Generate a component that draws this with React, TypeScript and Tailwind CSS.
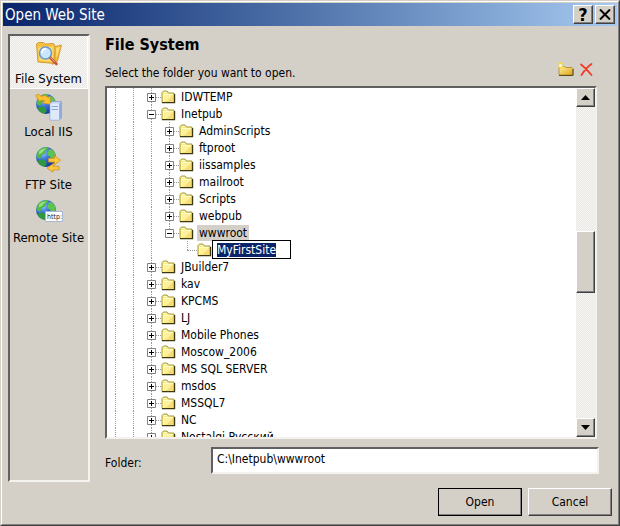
import { useEffect, useRef, useState } from "react";

type TreeRow = {
  name: string;
  depth: number;
  open?: boolean;
  last?: boolean;
  selected?: boolean;
  editing?: boolean;
};

const rows: TreeRow[] = [
  { name: "IDWTEMP", depth: 2 },
  { name: "Inetpub", depth: 2, open: true },
  { name: "AdminScripts", depth: 3 },
  { name: "ftproot", depth: 3 },
  { name: "iissamples", depth: 3 },
  { name: "mailroot", depth: 3 },
  { name: "Scripts", depth: 3 },
  { name: "webpub", depth: 3 },
  { name: "wwwroot", depth: 3, open: true, last: true, selected: true },
  { name: "MyFirstSite", depth: 4, last: true, editing: true },
  { name: "JBuilder7", depth: 2 },
  { name: "kav", depth: 2 },
  { name: "KPCMS", depth: 2 },
  { name: "LJ", depth: 2 },
  { name: "Mobile Phones", depth: 2 },
  { name: "Moscow_2006", depth: 2 },
  { name: "MS SQL SERVER", depth: 2 },
  { name: "msdos", depth: 2 },
  { name: "MSSQL7", depth: 2 },
  { name: "NC", depth: 2 },
  { name: "Nostalgi Русский", depth: 2 },
];

const raised =
  "border border-t-white border-l-white border-r-[#404040] border-b-[#404040] bg-[#d4d0c8] shadow-[inset_-1px_-1px_0_#808080]";
const sunken =
  "border-2 border-t-[#606060] border-l-[#606060] border-r-[#f4f2ee] border-b-[#f4f2ee]";
const dither =
  "bg-[#f1f0ed] bg-[conic-gradient(#e8e6e2_25%,#f8f7f5_0_50%,#e8e6e2_0_75%,#f8f7f5_0)] bg-size-[2px_2px]";

const FolderIcon = () => (
  <svg width="15" height="14" viewBox="0 0 15 14" className="shrink-0">
    <path d="M1 12.5V2.5L2.5 1H6l1.5 2H13v9.5z" fill="#f8ec84" stroke="#a39a3c" />
    <path d="M2 11V4h10v7z" fill="#fff09a" />
    <path d="M5 12L12 5v7z" fill="#f5dc76" />
    <path d="M2 4.5h10M2.5 4v8M3 2.5h3" stroke="#fffbc8" fill="none" />
    <path d="M1 12.7h12.6V4" stroke="#3c3810" strokeWidth="1.2" fill="none" />
  </svg>
);

const Expander = ({ open }: { open?: boolean }) => (
  <svg width="9" height="9" viewBox="0 0 9 9" className="absolute top-[5px] left-1">
    <path d="M.5.5h8v8h-8z" fill="#fff" stroke="#808080" />
    <path d={open ? "M2 4.5h5" : "M2 4.5h5M4.5 2v5"} stroke="#000" />
  </svg>
);

const Guides = ({ row }: { row: TreeRow }) => {
  const cells = [];
  for (let i = 0; i < row.depth; i++) {
    cells.push(
      <span key={i} className="relative w-[18px] shrink-0 self-stretch">
        {!(row.depth === 4 && i === 3) && (
          <span className="absolute inset-y-0 left-2 border-l border-dotted border-[#999]" />
        )}
      </span>
    );
  }
  return (
    <>
      {cells}
      <span className="relative w-[18px] shrink-0 self-stretch">
        <span
          className={`absolute top-0 left-2 border-l border-dotted border-[#999] ${
            row.last ? "h-[9px]" : "h-full"
          }`}
        />
        <span className="absolute top-[9px] right-0 left-2 border-t border-dotted border-[#999]" />
        {!row.editing && <Expander open={row.open} />}
      </span>
    </>
  );
};

const Globe = ({ id }: { id: string }) => (
  <>
    <defs>
      <radialGradient id={id} cx="35%" cy="30%" r="75%">
        <stop offset="0" stopColor="#9cc8fa" />
        <stop offset="0.4" stopColor="#3f78dc" />
        <stop offset="1" stopColor="#12309a" />
      </radialGradient>
    </defs>
    <circle cx="11" cy="11" r="10" fill={`url(#${id})`} />
    <path d="M2 7C4 3 8 1 12 1l1.500 2-3 1.500-.5 3L7 9l-2 4-2-1-1.500-1z" fill="#4fb848" />
    <path d="M4 14l4-.5 3 2 .5 3-2 2.300C7 20.500 4 18.500 2.500 15.500z" fill="#2f9a3c" />
    <path d="M14 3l3 .5c4 3 4.500 7 3 11l-3 2.500-2-3 .5-3-3-2 .5-3z" fill="#5cc450" />
    <path d="M4 5.500C6 3 9 2 11.500 2.500L9 4.500 7 7 4 8.500z" fill="#a8e890" opacity=".8" />
  </>
);

const FileSystemIcon = () => (
  <svg width="28" height="28" viewBox="0 0 28 28">
    <path d="M18 7l8.500-2-4 16-5 3.500z" fill="#f4b930" stroke="#c98b1c" strokeWidth=".7" />
    <path d="M21 8l4-1.500-3.500 12z" fill="#fce07a" />
    <path d="M1.500 4l2-1.500h5L10.500 4l8-.5 1.500 2.500-.5 17.500L3 22z" fill="#f6c040" stroke="#cf962a" strokeWidth=".9" />
    <path d="M3 7.500l15.500-1-.5 15.500L4 20.500z" fill="#fbd96a" />
    <circle cx="10.500" cy="13" r="6" fill="#c8e6fc" stroke="#6a9ad0" strokeWidth="1.600" />
    <path d="M7 13c0-3 2-4.200 4-4.200" stroke="#fff" strokeWidth="2" fill="none" />
    <path d="M15.500 18l6 6" stroke="#c4583a" strokeWidth="2.600" strokeLinecap="round" />
    <path d="M15.500 17.500l4.500 4.500" stroke="#f0b496" strokeWidth=".8" />
  </svg>
);

const LocalIisIcon = () => (
  <svg width="28" height="28" viewBox="0 0 28 28">
    <Globe id="globe-iis" />
    <path d="M.7 2.500L3.500 1 6 3.500c3-1.500 5-1.200 7 1l2-1.500.5 8.500-8-1.500 2.300-1.800C8 6.700 6.500 7 4.500 8.500z" fill="#fbbf30" stroke="#c98a14" strokeWidth=".7" />
    <path d="M15 10.500L17 8.500h9.500V25l-2 2H15z" fill="#c6d6f4" stroke="#7f98cc" strokeWidth=".7" />
    <path d="M15.500 10.500h8.700v16.200h-8.700z" fill="#dfe9fc" />
    <path d="M16.500 13.500h6.500M16.500 16.500h6.500" stroke="#8fa8d8" />
    <path d="M24.200 10.500l2.100-1.700v16l-2.100 1.900z" fill="#8ea8dc" />
  </svg>
);

const FtpIcon = () => (
  <svg width="28" height="28" viewBox="0 0 28 28">
    <Globe id="globe-ftp" />
    <path d="M13.500 12.300h6V9.500l6 4.700-6 4.600V16h-6z" fill="#ffc842" stroke="#c98a14" strokeWidth=".7" />
    <path d="M24 20.300h-6v-2.500L12 22l6 4.300v-2.500h6z" fill="#ffc842" stroke="#c98a14" strokeWidth=".7" />
  </svg>
);

const RemoteIcon = () => (
  <svg width="28" height="28" viewBox="0 0 28 28">
    <Globe id="globe-http" />
    <path d="M10.500 12.500h17v10h-17z" fill="#fff" stroke="#a8b8d4" />
    <text x="12" y="20" fontSize="7" fontFamily="'DejaVu Sans Condensed', sans-serif" fill="#222">
      http:
    </text>
  </svg>
);

const NewFolderIcon = () => (
  <svg width="17" height="15" viewBox="0 0 17 15">
    <defs>
      <linearGradient id="new-folder" x1="0" y1="0" x2="1" y2="1">
        <stop offset="0" stopColor="#fff0a0" />
        <stop offset="1" stopColor="#dda419" />
      </linearGradient>
    </defs>
    <path d="M2 13V5l1-1h4l1.500 1.500H15L16 6.500V13z" fill="url(#new-folder)" stroke="#a8862c" strokeWidth=".8" />
    <path d="M2 13.500h14V7" stroke="#5a4818" fill="none" />
    <path d="M3.500 0v7M0 3.500h7M1 1l5 5M6 1L1 6" stroke="#f3d64e" strokeWidth="1" />
    <circle cx="3.500" cy="3.500" r="1.500" fill="#fffbd0" />
  </svg>
);

const DeleteIcon = () => (
  <svg width="13" height="13" viewBox="0 0 13 13">
    <path d="M1 1.500C5 4.500 8 8 11.500 12M11.500 1C7 4 4 8 1.500 12" stroke="#f03c28" strokeWidth="1.800" strokeLinecap="round" fill="none" />
  </svg>
);

const places = [
  { label: "File System", icon: <FileSystemIcon /> },
  { label: "Local IIS", icon: <LocalIisIcon /> },
  { label: "FTP Site", icon: <FtpIcon /> },
  { label: "Remote Site", icon: <RemoteIcon /> },
];

const ScrollArrow = ({ down }: { down?: boolean }) => (
  <button
    type="button"
    aria-label={down ? "Scroll down" : "Scroll up"}
    className={`flex h-[19px] shrink-0 items-center justify-center ${raised}`}
  >
    <svg width="9" height="5" viewBox="0 0 9 5">
      <path d={down ? "M0 0h9L4.500 5z" : "M0 5h9L4.500 0z"} />
    </svg>
  </button>
);

export default function App() {
  const [place, setPlace] = useState("File System");
  const nameRef = useRef<HTMLInputElement>(null);

  useEffect(() => {
    nameRef.current?.focus();
    nameRef.current?.select();
  }, []);

  return (
    <div className="flex h-screen flex-col border border-t-[#d4d0c8] border-r-[#404040] border-b-[#404040] border-l-[#d4d0c8] bg-[#d4d0c8] font-['DejaVu_Sans_Condensed','Noto_Sans',sans-serif] text-xs text-black">
      <div className="flex min-h-0 flex-1 flex-col border border-t-white border-r-[#808080] border-b-[#808080] border-l-white px-px pt-px">
        <header className="flex h-[23px] shrink-0 items-center bg-linear-to-r from-[#0a246a] to-[#a6caf0] px-0.5">
          <h1 className="flex-1 text-[15px] leading-5 text-white">Open Web Site</h1>
          <div className="flex gap-0.5">
            <button type="button" aria-label="Help" className={`flex h-[19px] w-5 items-center justify-center text-lg leading-4 font-bold ${raised}`}>
              ?
            </button>
            <button type="button" aria-label="Close" className={`flex h-[19px] w-5 items-center justify-center ${raised}`}>
              <svg width="12" height="11" viewBox="0 0 12 11">
                <path d="M1 .5l10 10M11 .5l-10 10" stroke="#000" strokeWidth="2" />
              </svg>
            </button>
          </div>
        </header>

        <div className="flex min-h-0 flex-1 pt-2 pl-[5px]">
          <nav className={`mb-[42px] w-[82px] shrink-0 ${sunken}`}>
            {places.map((p) => (
              <button
                type="button"
                key={p.label}
                onClick={() => setPlace(p.label)}
                className={`flex h-[53px] w-full flex-col items-center justify-between border-r border-b pt-1 text-[13px] leading-[18px] whitespace-nowrap ${
                  p.label === place ? `border-white ${dither}` : "border-transparent"
                }`}
              >
                <span className="h-7">{p.icon}</span>
                {p.label}
              </button>
            ))}
          </nav>

          <main className="flex min-w-0 flex-1 flex-col pl-[15px]">
            <h2 className="pt-px text-base leading-5 font-bold">File System</h2>
            <div className="mt-[5px] mr-6 flex h-[26px] shrink-0 items-center">
              <p className="flex-1">Select the folder you want to open.</p>
              <button type="button" aria-label="New folder" className="mr-1.5 mb-2">
                <NewFolderIcon />
              </button>
              <button type="button" aria-label="Delete" className="mb-2">
                <DeleteIcon />
              </button>
            </div>

            <div className={`mr-5 flex min-h-0 flex-1 bg-white ${sunken}`}>
              <ul className="min-w-0 flex-1 overflow-hidden">
                {rows.map((row) => (
                  <li key={row.name} className="flex h-[17px] items-center">
                    <Guides row={row} />
                    <span className="w-[18px] shrink-0">
                      <FolderIcon />
                    </span>
                    {row.editing ? (
                      <input
                        ref={nameRef}
                        aria-label="Folder name"
                        defaultValue={row.name}
                        className="relative z-10 -my-px -ml-[3px] h-[19px] w-[79px] border border-black bg-white px-1 leading-4 outline-none selection:bg-[#0a246a] selection:text-white"
                      />
                    ) : (
                      <span className={`px-0.5 leading-4 whitespace-nowrap ${row.selected ? "bg-[#d4d0c8]" : ""}`}>
                        {row.name}
                      </span>
                    )}
                  </li>
                ))}
              </ul>
              <div className={`flex w-[19px] shrink-0 flex-col ${dither}`}>
                <ScrollArrow />
                <div className="flex-[124]" />
                <div className={`h-[62px] shrink-0 ${raised}`} />
                <div className="flex-[126]" />
                <ScrollArrow down />
              </div>
            </div>

            <div className="mt-2 mr-[18px] flex h-[27px] shrink-0 items-center">
              <label htmlFor="folder" className="w-[106px] pt-1">
                Folder:
              </label>
              <input
                id="folder"
                defaultValue="C:\Inetpub\wwwroot"
                className={`h-full min-w-0 flex-1 bg-white px-1 pb-1 outline-none ${sunken}`}
              />
            </div>

            <div className="mt-3.5 mr-[5px] mb-2 flex shrink-0 justify-end gap-1.5">
              <button type="button" className={`h-7 w-[84px] outline -outline-offset-1 outline-black ${raised}`}>
                Open
              </button>
              <button type="button" className={`h-7 w-[84px] ${raised}`}>
                Cancel
              </button>
            </div>
          </main>
        </div>
      </div>
    </div>
  );
}
